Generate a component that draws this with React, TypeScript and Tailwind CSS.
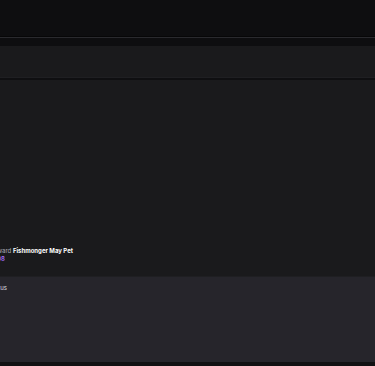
export default function App() {
  return (
    <div
      className="w-[375px] h-[366px] overflow-hidden bg-[#0e0e10] flex flex-col"
      style={{ fontFamily: '"Inter", "Liberation Sans", sans-serif' }}
    >
      <div className="h-[36px] shrink-0 bg-[#0e0e10]" />
      <div className="h-[1px] shrink-0 bg-[#070708]" />
      <div className="h-[1px] shrink-0 bg-[#2a2a2e]" />
      <div className="h-[8px] shrink-0 bg-[#0e0e10]" />
      <div className="h-[32px] shrink-0 bg-[#1a1a1c] border-b border-[#1f1f22]" />
      <div className="h-[2px] shrink-0 bg-[#0f0f11]" />
      <div className="flex-1 bg-[#1a1a1c] flex flex-col justify-end pb-[13px]">
        <div className="-ml-[10px] text-[6px] leading-[8px] text-[#dcdce0]">
          <span className="text-[#adadb8]">Reward </span>
          <span className="font-bold text-white">Fishmonger May Pet</span>
        </div>
        <div className="-ml-[3px] text-[6px] leading-[8px] font-semibold text-[#a970ff]">08</div>
      </div>
      <div className="h-[1px] shrink-0 bg-[#1f1f22]" />
      <div className="h-[85px] shrink-0 bg-[#26252b] pt-[7px]">
        <div className="-ml-[11px] text-[6px] leading-[8px] text-[#dcdce0]">Status</div>
      </div>
      <div className="h-[4px] shrink-0 bg-[#111113]" />
    </div>
  );
}
